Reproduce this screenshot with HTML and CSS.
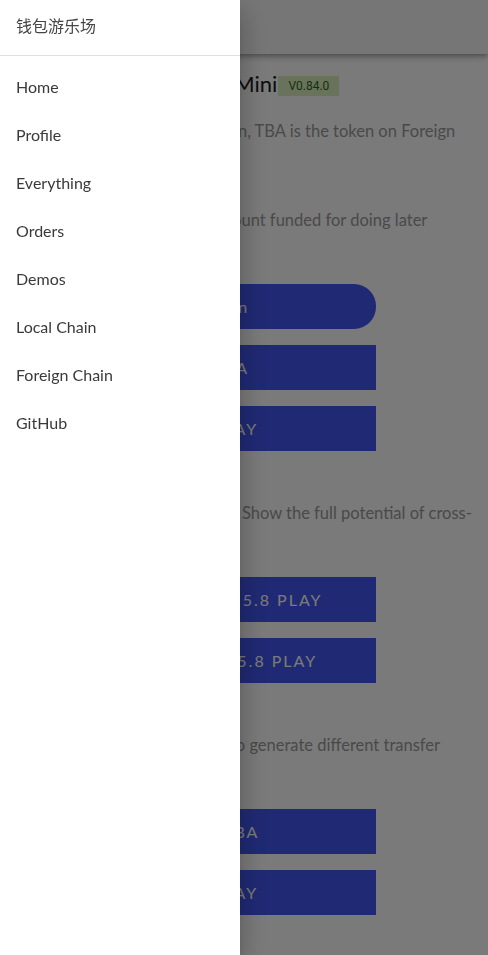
FILE: index.html
```html
<!DOCTYPE html>
<html lang="en">
<head>
<meta charset="utf-8">
<title>钱包游乐场</title>
<link rel="stylesheet" href="styles.css">
</head>
<body>
<div class="page">
  <header class="appbar"></header>
  <main class="content">
    <h1 class="title">My Wallet Playground Mini<span class="badge">V0.84.0</span></h1>
    <section class="section">
      <p class="text first">TBB is the Token on Local Chain, TBA is the token on Foreign<br>Chain.</p>
      <p class="text">Make sure YOU have your account funded for doing later<br>demos.</p>
      <div class="actions">
        <button class="btn round">Wallet Login</button>
        <button class="btn">Funds TBA</button>
        <button class="btn">Global Play</button>
      </div>
    </section>
    <section class="section">
      <p class="text">Demos of atomic swap usages. Show the full potential of cross-<br>chain.</p>
      <div class="actions">
        <button class="btn">Swap TBB to TBA 5.8 Play</button>
        <button class="btn">Sell TBA to TBB 5.8 Play</button>
      </div>
    </section>
    <section class="section">
      <p class="text">Use different wallet accounts to generate different transfer<br>results.</p>
      <div class="actions">
        <button class="btn">Send 1.0 TBA</button>
        <button class="btn">Global Play</button>
      </div>
    </section>
  </main>
</div>
<div class="backdrop"></div>
<nav class="drawer">
  <div class="drawer-head">钱包游乐场</div>
  <ul class="menu">
    <li>Home</li>
    <li>Profile</li>
    <li>Everything</li>
    <li>Orders</li>
    <li>Demos</li>
    <li>Local Chain</li>
    <li>Foreign Chain</li>
    <li>GitHub</li>
  </ul>
</nav>
</body>
</html>
```

FILE: styles.css
```css
html, body {
  margin: 0;
  padding: 0;
  height: 100%;
  overflow: hidden;
}
body {
  background: #ffffff;
  font-family: Lato, "Noto Sans CJK SC", sans-serif;
  color: #222;
}
.page {
  min-height: 100%;
}
.appbar {
  height: 54px;
  background: #f7f7f7;
  box-shadow: 0 2px 4px -1px rgba(0,0,0,0.2), 0 4px 5px 0 rgba(0,0,0,0.14), 0 1px 10px 0 rgba(0,0,0,0.12);
}
.content {
  padding: 15px 16px 0;
}
.title {
  margin: 0;
  font-size: 22px;
  font-weight: 400;
  line-height: 30px;
  color: #1a1a1a;
  white-space: nowrap;
}
.badge {
  display: inline-block;
  vertical-align: 2px;
  margin-left: 1px;
  padding: 0 10px;
  height: 20px;
  line-height: 20px;
  font-family: Roboto, sans-serif;
  font-size: 12px;
  background: #dcf0c0;
  color: #2a6a10;
}
.section {
  margin-bottom: 50px;
}
.text {
  margin: 0 0 28px;
  font-size: 16.5px;
  line-height: 24px;
  color: #9a9a9a;
  white-space: nowrap;
}
.text.first {
  margin-top: 20px;
  margin-bottom: 41px;
}
.actions {
  display: flex;
  flex-direction: column;
  gap: 16px;
  width: 360px;
}
.btn {
  height: 45px;
  border: 0;
  margin: 0;
  background: #4357f2;
  color: #fff;
  font-family: Lato, sans-serif;
  font-size: 16px;
  letter-spacing: 2px;
  text-transform: uppercase;
}
.btn.round {
  border-radius: 22px;
  text-transform: none;
  letter-spacing: 1.5px;
}
.backdrop {
  position: fixed;
  inset: 0;
  background: rgba(0,0,0,0.52);
}
.drawer {
  position: fixed;
  left: 0;
  top: 0;
  bottom: 0;
  width: 240px;
  background: #fff;
  box-shadow: 0 8px 10px -5px rgba(0,0,0,0.2), 0 16px 24px 2px rgba(0,0,0,0.14), 0 6px 30px 5px rgba(0,0,0,0.12);
}
.drawer-head {
  height: 56px;
  box-sizing: border-box;
  border-bottom: 1px solid #e0e0e0;
  padding: 0 16px 6px;
  display: flex;
  align-items: center;
  font-size: 16px;
  color: #444;
}
.menu {
  list-style: none;
  margin: 0;
  padding: 6px 0 0;
}
.menu li {
  height: 48px;
  display: flex;
  align-items: center;
  padding: 0 16px;
  font-size: 16px;
  color: #3a3a3a;
}
```
